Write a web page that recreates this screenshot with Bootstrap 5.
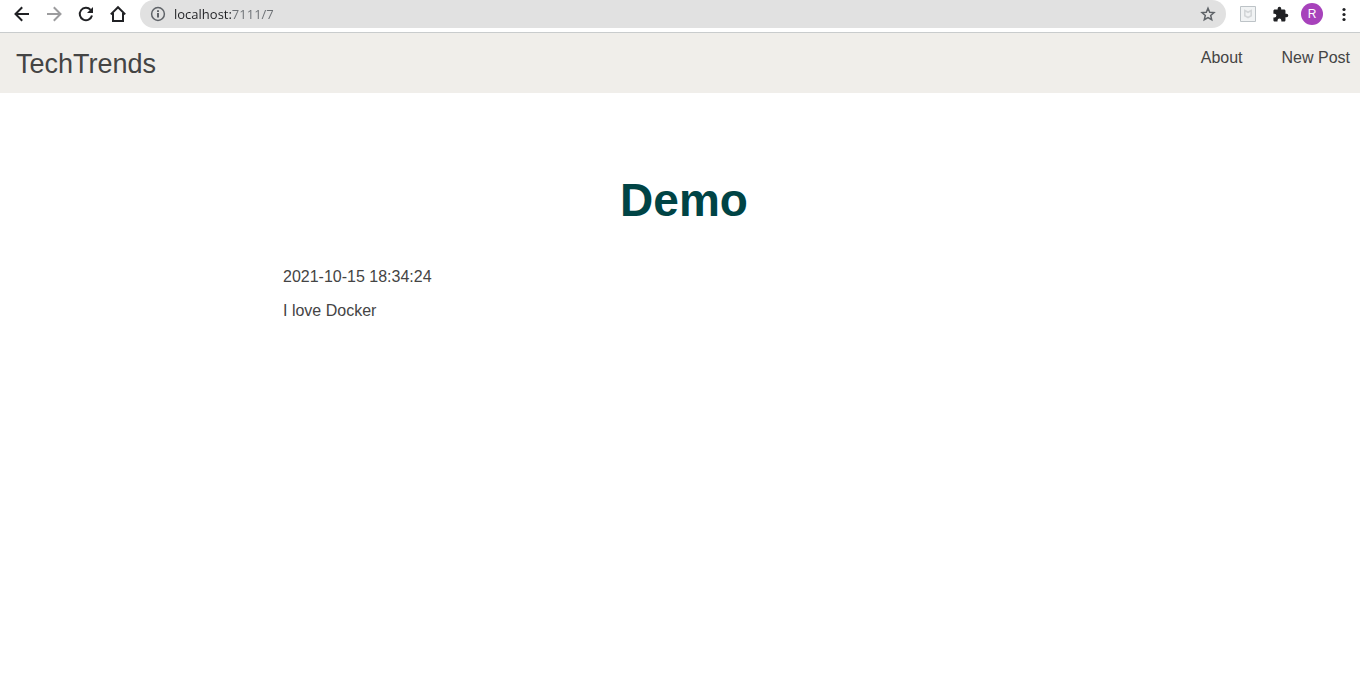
<!DOCTYPE html>
<html lang="en">
<head>
<meta charset="utf-8">
<meta name="viewport" content="width=device-width, initial-scale=1">
<title>TechTrends - Demo</title>
<link href="https://cdn.jsdelivr.net/npm/bootstrap@5.3.0/dist/css/bootstrap.min.css" rel="stylesheet">
<style>
  body { font-family: "Liberation Sans", Arial, sans-serif; color: #444; background: #fff; }
  .browser-bar { height: 33px; padding: 0 0 4px 6px; border-bottom: 1px solid #c9cccd; }
  .tool { width: 32px; height: 28px; color: #202124; }
  .tool:disabled { color: #9c9c9e; opacity: 1; border: 0; }
  .omnibox { height: 28px; margin: 0 6px 0 6px; padding-left: 10px; padding-right: 2px; background: #e1e1e1; }
  .omnibox input {
    font: 13px "Open Sans", "Segoe UI", sans-serif; outline: 0; min-width: 0;
    color: transparent; background: linear-gradient(to right, #202124 58px, #6b6f73 58px);
    -webkit-background-clip: text; background-clip: text;
  }
  .avatar { width: 22px; height: 22px; background: #a742bb; font-size: 12px; }
  .site-bar { background: #f0eeea; height: 60px; padding: 0 10px 0 16px; }
  .site-bar a { color: #444; }
  .site-name { font-size: 27px; line-height: 62px; }
  .site-links { gap: 39px; line-height: 50px; }
  .post { max-width: 802px; padding-top: 71px; line-height: 18px; }
  .post h1 { color: #004445; font-size: 46px; line-height: 72px; margin-bottom: 32px; }
</style>
<script defer src="https://cdn.jsdelivr.net/npm/bootstrap@5.3.0/dist/js/bootstrap.bundle.min.js"></script>
</head>
<body>
<div class="browser-bar d-flex align-items-center">
  <button type="button" class="tool btn p-0 border-0 d-flex align-items-center justify-content-center" aria-label="Back">
    <svg width="16" height="16" viewBox="0 0 16 16" fill="none" stroke="currentColor" stroke-width="2"><path d="M15 8H2M8.2 1.3L1.5 8l6.7 6.7"/></svg>
  </button>
  <button type="button" class="tool btn p-0 border-0 d-flex align-items-center justify-content-center" aria-label="Forward" disabled>
    <svg width="16" height="16" viewBox="0 0 16 16" fill="none" stroke="currentColor" stroke-width="2"><path d="M1 8h13M7.8 1.3L14.5 8l-6.7 6.7"/></svg>
  </button>
  <button type="button" class="tool btn p-0 border-0 d-flex align-items-center justify-content-center" aria-label="Reload">
    <svg width="16" height="16" viewBox="0 0 16 16"><path d="M14 9.5A6.2 6.2 0 1 1 12.6 3.8" fill="none" stroke="currentColor" stroke-width="2"/><path d="M15 1v6H9z" fill="currentColor"/></svg>
  </button>
  <button type="button" class="tool btn p-0 border-0 d-flex align-items-center justify-content-center" aria-label="Home">
    <svg width="18" height="18" viewBox="0 0 18 18" fill="none" stroke="currentColor" stroke-width="2"><path d="M1.8 9.4L9 2.2l7.2 7.2M4 8v8h10V8"/></svg>
  </button>
  <div class="omnibox rounded-pill d-flex align-items-center flex-grow-1">
    <svg width="16" height="16" viewBox="0 0 16 16" fill="none" stroke="#5f6368" stroke-width="1.5" aria-hidden="true"><circle cx="8" cy="8" r="6.4"/><path d="M8 7v4.500M8 4.300v1.800" stroke-width="2"/></svg>
    <input type="text" class="flex-grow-1 border-0 p-0 ms-2" aria-label="Address" value="localhost:7111/7" spellcheck="false">
    <button type="button" class="tool btn p-0 border-0 d-flex align-items-center justify-content-center" aria-label="Bookmark this page">
      <svg width="16" height="16" viewBox="0 0 16 16" fill="none" stroke="#5f6368" stroke-width="1.5"><path d="M8 2.200l1.700 4 4.300.4-3.300 2.900 1 4.200L8 11.500l-3.700 2.200 1-4.200L2 6.600l4.300-.4z"/></svg>
    </button>
  </div>
  <button type="button" class="tool btn p-0 border-0 d-flex align-items-center justify-content-center" aria-label="Site protection">
    <svg width="16" height="16" viewBox="0 0 16 16"><path d="M.5.5h15v15H.5z" fill="#f1f3f4" stroke="#bdc3c7"/><path d="M4.800 4.500l3.200 1.800 3.200-1.800v5.300L8 11.500 4.800 9.800z" fill="none" stroke="#d3d6d8" stroke-width="1.600"/></svg>
  </button>
  <button type="button" class="tool btn p-0 border-0 d-flex align-items-center justify-content-center" aria-label="Extensions">
    <svg width="17" height="17" viewBox="0 0 24 24" fill="currentColor"><path d="M20.5 11H19V7c0-1.100-.9-2-2-2h-4V3.500a2.500 2.500 0 0 0-5 0V5H4c-1.100 0-2 .9-2 2v3.800h1.500a2.700 2.700 0 0 1 0 5.400H2V20c0 1.100.9 2 2 2h3.800v-1.500a2.700 2.700 0 0 1 5.400 0V22H17c1.100 0 2-.9 2-2v-4h1.500a2.500 2.500 0 0 0 0-5z"/></svg>
  </button>
  <button type="button" class="tool btn p-0 border-0 d-flex align-items-center justify-content-center" aria-label="Profile">
    <span class="avatar rounded-circle text-white d-flex align-items-center justify-content-center">R</span>
  </button>
  <button type="button" class="tool btn p-0 border-0 d-flex align-items-center justify-content-center" aria-label="Menu">
    <svg width="16" height="16" viewBox="0 0 16 16" fill="currentColor"><circle cx="8" cy="3.500" r="1.600"/><circle cx="8" cy="8.500" r="1.600"/><circle cx="8" cy="13.500" r="1.600"/></svg>
  </button>
</div>

<nav class="site-bar d-flex justify-content-between align-items-start">
  <a class="site-name text-decoration-none" href="#">TechTrends</a>
  <div class="site-links d-flex">
    <a class="text-decoration-none" href="#">About</a>
    <a class="text-decoration-none" href="#">New Post</a>
  </div>
</nav>

<main class="ps-2">
  <article class="post mx-auto">
    <h1 class="fw-bold text-center">Demo</h1>
    <p class="mb-3">2021-10-15 18:34:24</p>
    <p class="mb-3">I love Docker</p>
  </article>
</main>
</body>
</html>
